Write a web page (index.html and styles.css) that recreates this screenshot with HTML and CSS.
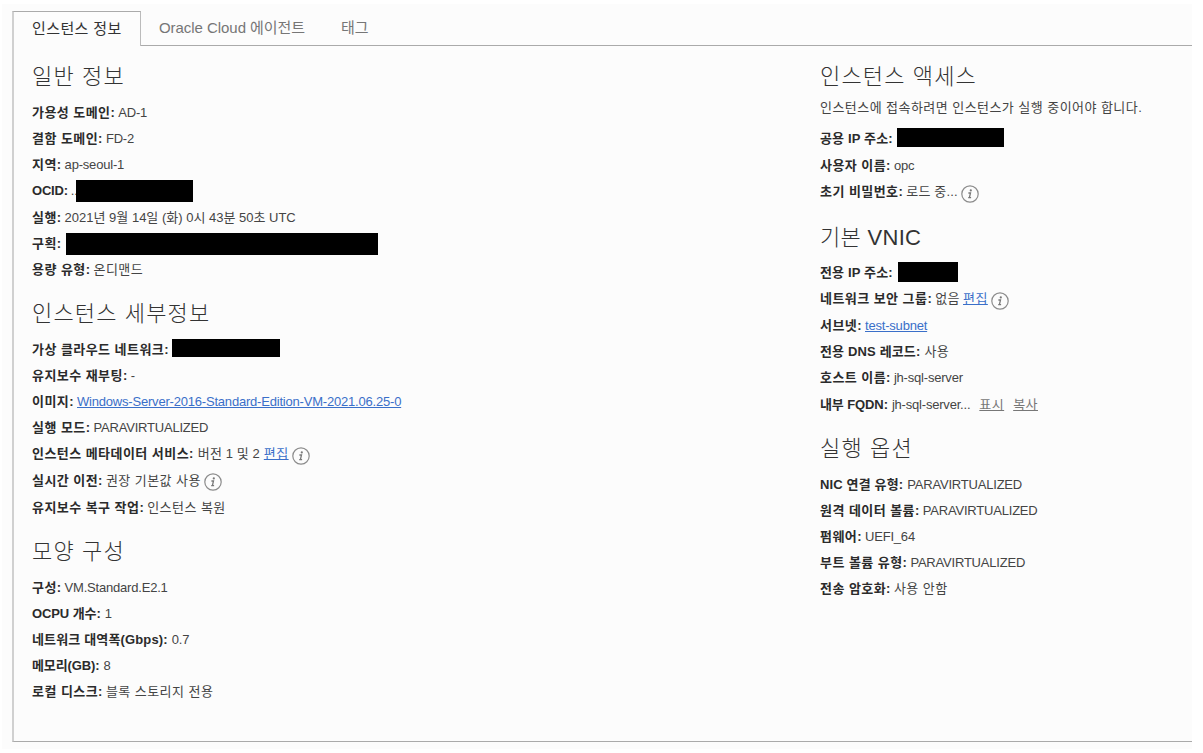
FILE: index.html
```
<!DOCTYPE html>
<html lang="ko">
<head>
  <meta charset="UTF-8">
  <meta name="viewport" content="width=device-width, initial-scale=1.0">
  <title>인스턴스 정보</title>
  <link rel="stylesheet" href="styles.css">
</head>
<body>
  <svg class="symbols" width="0" height="0">
    <symbol id="info" viewBox="0 0 18 18">
      <circle cx="9" cy="9" r="8.2" fill="none" stroke="#8c8c8c" stroke-width="1.2"/>
      <circle cx="9.8" cy="5.4" r="1.1" fill="#777"/>
      <path d="M7.4 8h2.1L8.4 12.6h1.7M7.2 12.6h1.2" fill="none" stroke="#777" stroke-width="1.3"/>
    </symbol>
  </svg>

  <div class="page">
    <nav class="tabs">
      <a class="tab active">인스턴스 정보</a>
      <a class="tab">Oracle Cloud 에이전트</a>
      <a class="tab">태그</a>
    </nav>

    <main class="panel">
      <div class="column">
        <h2 class="ko">일반 정보</h2>
        <ul>
          <li><b class="ko">가용성 도메인:</b><span>AD-1</span></li>
          <li><b class="ko">결함 도메인:</b><span>FD-2</span></li>
          <li><b class="ko">지역:</b><span>ap-seoul-1</span></li>
          <li><b>OCID:</b><span class="dots">..</span><i class="mask mask-ocid"></i></li>
          <li class="tall"><b class="ko">실행:</b><span class="date">2021년 9월 14일 (화) 0시 43분 50초 UTC</span></li>
          <li><b class="ko">구획:</b><i class="mask mask-compartment"></i></li>
          <li><b class="ko">용량 유형:</b><span class="ko">온디맨드</span></li>
        </ul>

        <h2 class="ko">인스턴스 세부정보</h2>
        <ul>
          <li><b class="ko">가상 클라우드 네트워크:</b><i class="mask mask-vcn"></i></li>
          <li><b class="ko">유지보수 재부팅:</b><span>-</span></li>
          <li><b class="ko">이미지:</b><a class="link">Windows-Server-2016-Standard-Edition-VM-2021.06.25-0</a></li>
          <li><b class="ko">실행 모드:</b><span>PARAVIRTUALIZED</span></li>
          <li><b class="ko">인스턴스 메타데이터 서비스:</b><span class="version">버전 1 및 2</span><a class="link ko">편집</a><svg class="info"><use href="#info"/></svg></li>
          <li class="tall"><b class="ko">실시간 이전:</b><span class="ko">권장 기본값 사용</span><svg class="info"><use href="#info"/></svg></li>
          <li class="tall"><b class="ko">유지보수 복구 작업:</b><span class="ko">인스턴스 복원</span></li>
        </ul>

        <h2 class="ko">모양 구성</h2>
        <ul>
          <li><b class="ko">구성:</b><span>VM.Standard.E2.1</span></li>
          <li><b class="latin">OCPU 개수:</b><span>1</span></li>
          <li><b class="mixed">네트워크 대역폭(Gbps):</b><span>0.7</span></li>
          <li><b class="latin">메모리(GB):</b><span>8</span></li>
          <li><b class="ko">로컬 디스크:</b><span class="ko">블록 스토리지 전용</span></li>
        </ul>
      </div>

      <div class="column">
        <h2 class="ko">인스턴스 액세스</h2>
        <p class="ko">인스턴스에 접속하려면 인스턴스가 실행 중이어야 합니다.</p>
        <ul>
          <li><b class="mixed">공용 IP 주소:</b><i class="mask mask-public"></i></li>
          <li class="tall"><b class="ko">사용자 이름:</b><span>opc</span></li>
          <li><b class="ko">초기 비밀번호:</b><span class="loading">로드 중...</span><svg class="info"><use href="#info"/></svg></li>
        </ul>

        <h2 class="vnic">기본 VNIC</h2>
        <ul>
          <li><b class="mixed">전용 IP 주소:</b><i class="mask mask-private"></i></li>
          <li><b class="ko">네트워크 보안 그룹:</b><span class="ko">없음</span><a class="link ko">편집</a><svg class="info"><use href="#info"/></svg></li>
          <li class="tall"><b class="ko">서브넷:</b><a class="link">test-subnet</a></li>
          <li><b class="mixed">전용 DNS 레코드:</b><span class="ko">사용</span></li>
          <li><b class="ko">호스트 이름:</b><span>jh-sql-server</span></li>
          <li class="tall"><b class="latin">내부 FQDN:</b><span>jh-sql-server...</span><a class="action ko">표시</a><a class="action ko">복사</a></li>
        </ul>

        <h2 class="ko">실행 옵션</h2>
        <ul>
          <li><b class="mixed">NIC 연결 유형:</b><span>PARAVIRTUALIZED</span></li>
          <li><b class="ko">원격 데이터 볼륨:</b><span>PARAVIRTUALIZED</span></li>
          <li><b class="ko">펌웨어:</b><span>UEFI_64</span></li>
          <li><b class="ko">부트 볼륨 유형:</b><span>PARAVIRTUALIZED</span></li>
          <li><b class="ko">전송 암호화:</b><span class="ko">사용 안함</span></li>
        </ul>
      </div>
    </main>
  </div>
</body>
</html>
```
FILE: styles.css
```
* {
  box-sizing: border-box;
}
body {
  margin: 0;
  background: #fff;
  color: #444;
  font: 13px/18px "Liberation Sans", "Noto Sans CJK KR", sans-serif;
  letter-spacing: -0.2px;
}
.symbols {
  display: block;
}
.page {
  width: 1190px;
  height: 745px;
  margin: 4px 0 0 2px;
  padding: 7px 0 7px 10px;
  background: #fcfcfc;
}
.ko {
  letter-spacing: 0.45px;
}
.mixed {
  letter-spacing: 0.15px;
}
.latin {
  letter-spacing: -0.1px;
}
.date {
  letter-spacing: 0;
}
.version {
  margin: 0 1px;
  letter-spacing: 0.1px;
}
.loading {
  letter-spacing: 0.15px;
}

/* tabs */
.tabs {
  display: flex;
  height: 35px;
}
.tab {
  padding: 8px 18px 0;
  border-bottom: 1px solid #aaa;
  color: #767676;
  font-size: 15px;
  letter-spacing: -0.05px;
  white-space: nowrap;
}
.tab:last-child {
  flex: 1;
}
.tab.active {
  width: 129px;
  border: 1px solid #aaa;
  border-left: 2px solid #d0d0d0;
  border-right-color: #bbb;
  border-bottom: none;
  color: #333;
  letter-spacing: 0.4px;
}

/* content */
.panel {
  display: grid;
  grid-template-columns: 788px 1fr;
  height: 696px;
  padding-left: 18px;
  border-left: 2px solid #d0d0d0;
  border-bottom: 1px solid #aaa;
}
h2 {
  height: 54px;
  margin: 0;
  padding-top: 9px;
  color: #333;
  font-size: 22px;
  font-weight: 300;
  line-height: 44px;
}
h2.ko {
  letter-spacing: 1.15px;
}
h2.vnic {
  height: 55px;
  padding-top: 11px;
  letter-spacing: 0.3px;
}
p {
  margin: -1px 0 9px;
}
ul {
  margin: 0;
  padding: 0;
  list-style: none;
}
li {
  display: flex;
  align-items: center;
  gap: 3px;
  height: 26px;
}
li.tall {
  height: 27px;
}
b {
  color: #2b2b2b;
}
.mixed,
.latin {
  margin-right: 1px;
}
.link {
  color: #3a6fc9;
  text-decoration: underline;
}
.action {
  margin-left: 6px;
  color: #777;
  text-decoration: underline;
}
.info {
  width: 18px;
  height: 18px;
  margin-top: 3px;
}

/* hidden values */
.mask {
  height: 22px;
  background: #000;
}
.mask-ocid {
  width: 117px;
  margin-left: -5px;
}
.mask-compartment {
  width: 312px;
  margin-left: 1px;
}
.mask-vcn {
  width: 108px;
  height: 18px;
  margin-top: -5px;
}
.mask-public {
  width: 107px;
  height: 19px;
  margin-top: -3px;
}
.mask-private {
  width: 60px;
  height: 20px;
  margin: -2px 0 0 1px;
}
```
